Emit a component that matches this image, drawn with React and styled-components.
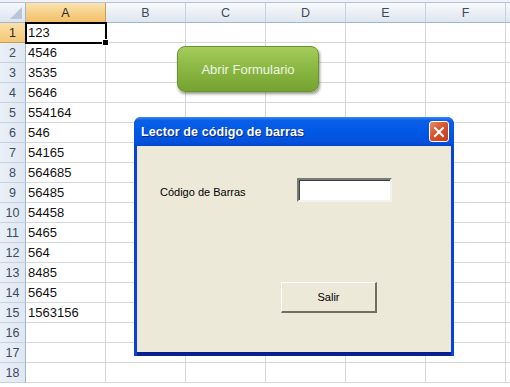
import React from 'react';
import styled, { createGlobalStyle } from 'styled-components';

const GlobalStyle = createGlobalStyle`
    html, body { margin: 0; padding: 0; background: #ffffff; }
    body { width: 510px; height: 387px; overflow: hidden; }
`;

const values = ['123', '4546', '3535', '5646', '554164', '546', '54165', '564685',
    '56485', '54458', '5465', '564', '8485', '5645', '1563156', '', '', ''];
const columns = ['A', 'B', 'C', 'D', 'E', 'F', ''];

const Sheet = styled.div`
    position: relative;
    width: 510px;
    height: 387px;
    overflow: hidden;
    font-family: "Liberation Sans", Arial, sans-serif;
    background: #fff;
`;

const TopStrip = styled.div`
    height: 3px;
    background: #eef2f8;
    border-bottom: 1px solid #b7c3d5;
    box-sizing: border-box;
`;

const Grid = styled.div`
    display: grid;
    grid-template-columns: 26px repeat(6, 80px) 30px;
    grid-auto-rows: 20px;
`;

const Corner = styled.div`
    background: linear-gradient(#f4f7fc, #dde5f1);
    border-right: 1px solid #9eb6ce;
    border-bottom: 1px solid #9eb6ce;
    box-sizing: border-box;
    position: relative;
    &::after {
        content: '';
        position: absolute;
        right: 3px;
        bottom: 3px;
        border-left: 12px solid transparent;
        border-bottom: 12px solid #b8c6d8;
    }
`;

const ColHead = styled.div`
    display: flex;
    align-items: center;
    justify-content: center;
    font-size: 12.5px;
    color: ${p => (p.$active ? '#2b2b2b' : '#3d4a5c')};
    background: ${p => (p.$active
        ? 'linear-gradient(#fbe3b2, #f6cf85 55%, #f3c06b)'
        : 'linear-gradient(#f8fafd, #e9eef5 55%, #dfe6ef)')};
    border-right: 1px solid ${p => (p.$active ? '#c9a14e' : '#c5d1de')};
    border-bottom: 1px solid ${p => (p.$active ? '#c9a14e' : '#9eb6ce')};
    box-sizing: border-box;
`;

const RowHead = styled.div`
    display: flex;
    align-items: center;
    justify-content: center;
    font-size: 12.5px;
    color: ${p => (p.$active ? '#2b2b2b' : '#3d4a5c')};
    background: ${p => (p.$active
        ? 'linear-gradient(#fbe0a8, #f4c877)'
        : 'linear-gradient(90deg, #eaf0f8, #dfe7f2)')};
    border-right: 1px solid #9eb6ce;
    border-bottom: 1px solid ${p => (p.$active ? '#c9a14e' : '#c5d1de')};
    box-sizing: border-box;
`;

const Cell = styled.div`
    position: relative;
    display: flex;
    align-items: center;
    padding-left: 2px;
    font-size: 13px;
    color: #111;
    border-right: 1px solid #d4d8de;
    border-bottom: 1px solid #d4d8de;
    box-sizing: border-box;
    ${p => p.$selected && `
        outline: 2px solid #000;
        outline-offset: -1px;
        z-index: 1;
        &::after {
            content: '';
            position: absolute;
            right: -4px;
            bottom: -4px;
            width: 5px;
            height: 5px;
            background: #000;
            border: 1px solid #fff;
        }
    `}
`;

const GreenButton = styled.div`
    position: absolute;
    left: 177px;
    top: 46px;
    width: 142px;
    height: 46px;
    border-radius: 8px;
    display: flex;
    align-items: center;
    justify-content: center;
    font-size: 13px;
    color: #eef5e2;
    background: linear-gradient(#a6cc5c, #8cb844 45%, #76a232);
    border: 1px solid #6b9330;
    box-shadow: 1px 2px 3px rgba(60, 70, 40, 0.55);
    box-sizing: border-box;
`;

const Dialog = styled.div`
    position: absolute;
    left: 134px;
    top: 117px;
    width: 320px;
    height: 239px;
    display: flex;
    flex-direction: column;
    border-radius: 7px 7px 0 0;
    background: #0843d6;
    box-sizing: border-box;
    font-family: "Liberation Sans", Tahoma, sans-serif;
`;

const TitleBar = styled.div`
    height: 29px;
    flex: none;
    display: flex;
    align-items: center;
    justify-content: space-between;
    padding: 0 5px 0 7px;
    border-radius: 7px 7px 0 0;
    background: linear-gradient(#3b87f4, #0a5fe8 12%, #0058e6 50%, #0452dc 85%, #0345cc);
`;

const Title = styled.span`
    color: #fff;
    font-weight: bold;
    font-size: 12.5px;
    letter-spacing: 0.1px;
    text-shadow: 1px 1px 0 #0a2a8a;
`;

const CloseBox = styled.div`
    width: 20px;
    height: 21px;
    border-radius: 3px;
    border: 1px solid #fff;
    box-sizing: border-box;
    background: linear-gradient(135deg, #ea8a6c, #d9542d 45%, #c2391a);
    display: flex;
    align-items: center;
    justify-content: center;
`;

const Client = styled.div`
    flex: 1;
    margin: 0 3px 3px 3px;
    background: #ece9d8;
    border-bottom: 1px solid #001d8b;
    position: relative;
    display: flex;
    flex-direction: column;
    box-shadow: 0 3px 0 #0a2192;
`;

const FieldRow = styled.div`
    display: flex;
    align-items: center;
    margin-top: 32px;
    padding-left: 23px;
`;

const Label = styled.span`
    font-size: 11px;
    color: #000;
    width: 137px;
    padding-top: 4px;
`;

const TextBox = styled.div`
    width: 95px;
    height: 24px;
    background: #fff;
    box-sizing: border-box;
    border-top: 2px solid #7a7a78;
    border-left: 2px solid #7a7a78;
    border-right: 2px solid #f4f2ea;
    border-bottom: 2px solid #f4f2ea;
    box-shadow: inset 1px 1px 0 #3f3f3f;
`;

const ButtonRow = styled.div`
    display: flex;
    margin-top: 80px;
    padding-left: 144px;
`;

const Button = styled.div`
    width: 96px;
    height: 31px;
    display: flex;
    align-items: center;
    justify-content: center;
    font-size: 11px;
    color: #000;
    background: #ece9d8;
    box-sizing: border-box;
    border-top: 1px solid #fff;
    border-left: 1px solid #fff;
    border-right: 2px solid #716f64;
    border-bottom: 2px solid #716f64;
`;

export default function App() {
    return (
        <Sheet>
            <GlobalStyle />
            <TopStrip />
            <Grid>
                <Corner />
                {columns.map((c, i) => (
                    <ColHead key={i} $active={c === 'A'}>{c}</ColHead>
                ))}
                {values.map((v, r) => (
                    <React.Fragment key={r}>
                        <RowHead $active={r === 0}>{r + 1}</RowHead>
                        {columns.map((c, i) => (
                            <Cell key={i} $selected={r === 0 && i === 0}>
                                {i === 0 ? v : ''}
                            </Cell>
                        ))}
                    </React.Fragment>
                ))}
            </Grid>

            <GreenButton>Abrir Formulario</GreenButton>

            <Dialog>
                <TitleBar>
                    <Title>Lector de código de barras</Title>
                    <CloseBox>
                        <svg width="12" height="12" viewBox="0 0 12 12">
                            <path d="M2 2 L10 10 M10 2 L2 10" stroke="#fff" strokeWidth="2" strokeLinecap="square" />
                        </svg>
                    </CloseBox>
                </TitleBar>
                <Client>
                    <FieldRow>
                        <Label>Código de Barras</Label>
                        <TextBox />
                    </FieldRow>
                    <ButtonRow>
                        <Button>Salir</Button>
                    </ButtonRow>
                </Client>
            </Dialog>
        </Sheet>
    );
}
